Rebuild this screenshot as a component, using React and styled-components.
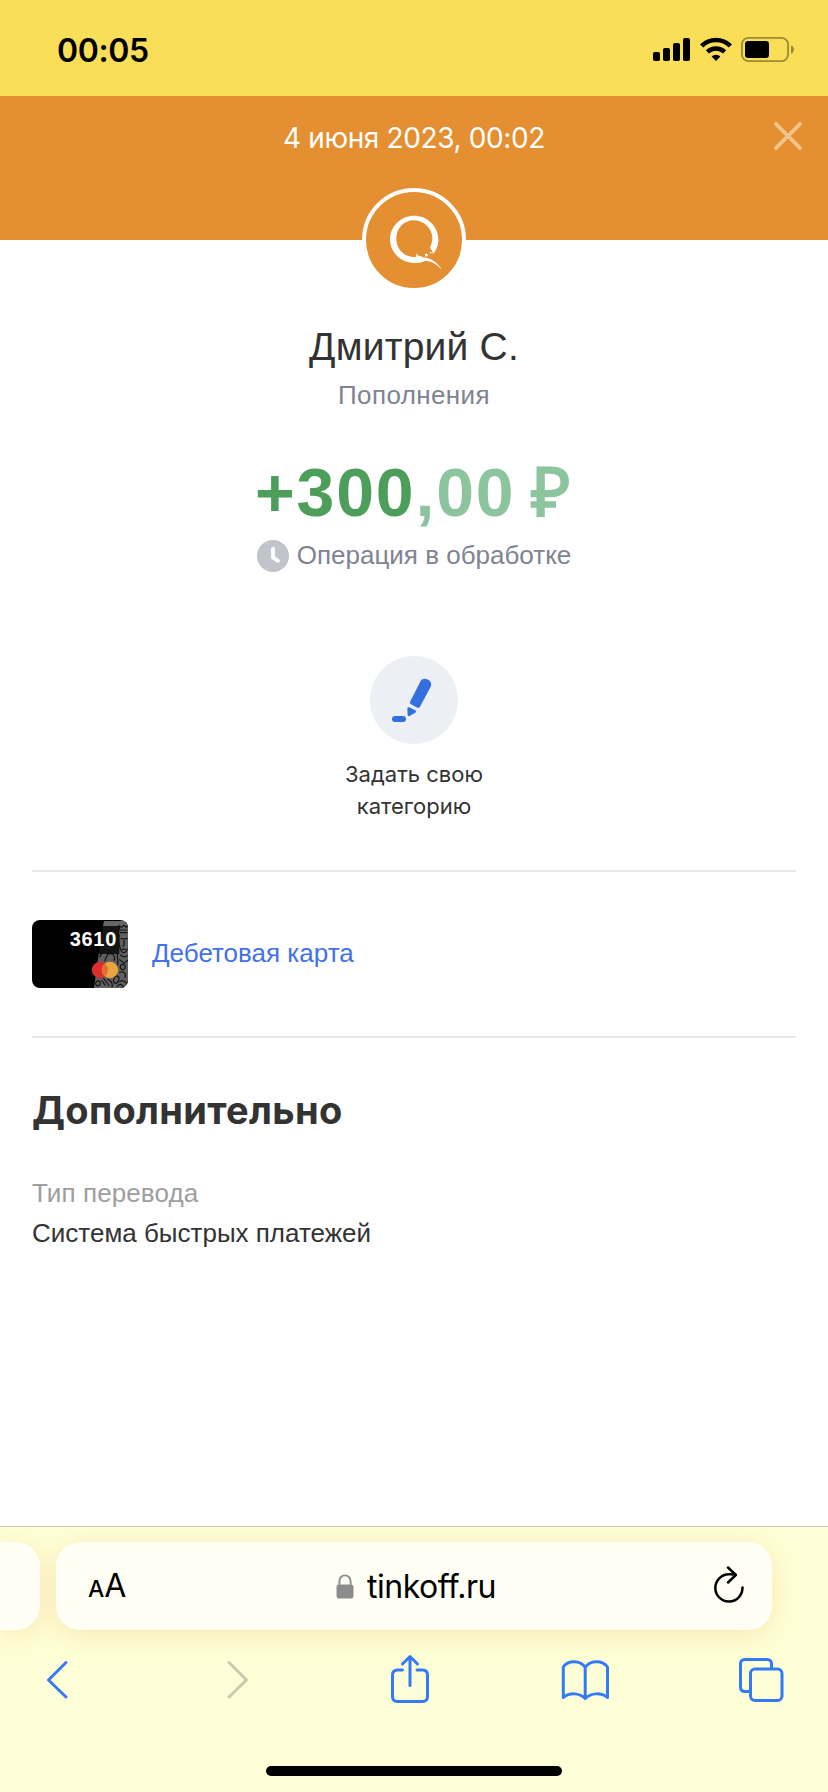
import styled, { createGlobalStyle } from "styled-components";

const FONTS = {
  body: `"Liberation Sans", Arial, sans-serif`,
  system: `Inter, "Liberation Sans", sans-serif`,
};

const COLORS = {
  orange: "#e48f31",
  text: "#333333",
  muted: "#7e8491",
  gray: "#9e9e9e",
  link: "#4272e8",
  income: "#4d9e5b",
  incomeLight: "#8cc59d",
  divider: "#e7e8ea",
  ios: "#347af6",
};

const App = () => {
  return (
    <Screen>
      <GlobalStyles />
      <StatusBar>
        <Time>00:05</Time>
        <Indicators>
          <SignalIcon />
          <WifiIcon />
          <BatteryIcon />
        </Indicators>
      </StatusBar>
      <Header>
        <HeaderDate>4 июня 2023, 00:02</HeaderDate>
        <CloseButton aria-label="Закрыть">
          <svg width="28" height="28" viewBox="0 0 28 28">
            <path
              d="M2 2L26 26M26 2L2 26"
              stroke="#f2c68a"
              strokeWidth="3.8"
              strokeLinecap="round"
            />
          </svg>
        </CloseButton>
      </Header>
      <Content>
        <Operation>
          <Logo>
            <QiwiLogo />
          </Logo>
          <Name>Дмитрий С.</Name>
          <Category>Пополнения</Category>
          <Amount>
            +300<Kopecks>,00 ₽</Kopecks>
          </Amount>
          <Status>
            <ClockIcon />
            <StatusText>Операция в обработке</StatusText>
          </Status>
          <Action>
            <ActionIcon>
              <MarkerIcon />
            </ActionIcon>
            <ActionLabel>
              Задать свою
              <br />
              категорию
            </ActionLabel>
          </Action>
        </Operation>
        <Account>
          <BankCard />
          <AccountLink href="#">Дебетовая карта</AccountLink>
        </Account>
        <Title>Дополнительно</Title>
        <Details>
          <Term>Тип перевода</Term>
          <Value>Система быстрых платежей</Value>
        </Details>
      </Content>
      <Browser>
        <Tabs>
          <PreviousTab />
          <AddressBar>
            <TextSize>
              <small>A</small>A
            </TextSize>
            <Domain>
              <LockIcon />
              tinkoff.ru
            </Domain>
            <ReloadIcon />
          </AddressBar>
        </Tabs>
        <Toolbar>
          <ToolIcon>
            <path d="M36 14.500L18.500 32L36 49" />
          </ToolIcon>
          <ToolIcon color="#cdc8ae">
            <path d="M23 14.500L40.500 32L23 49" />
          </ToolIcon>
          <ToolIcon>
            <path d="M20.500 22H15.500Q10.500 22 10.500 27V48.500Q10.500 53.500 15.500 53.500H40.500Q45.500 53.500 45.500 48.500V27Q45.500 22 40.500 22H35" />
            <path d="M28 37.500V10M20.500 16L28 8.500L35.500 16" />
          </ToolIcon>
          <ToolIcon>
            <path d="M27.200 50.500V19.500C22.500 12 10 12 5.300 19V49.500C11.500 44.500 21.500 44.500 27.200 50.500C33 44.500 43 44.500 49.500 49.500V19C44.500 12 32 12 27.200 19.500" />
          </ToolIcon>
          <ToolIcon>
            <rect x="16.500" y="21" width="31.500" height="31.500" rx="4.500" />
            <path d="M16.500 43.500H11Q6.500 43.500 6.500 39V16Q6.500 11.500 11 11.500H33Q37.500 11.500 37.500 16V20.500" />
          </ToolIcon>
        </Toolbar>
        <HomeIndicator />
      </Browser>
    </Screen>
  );
};

const SignalIcon = () => (
  <svg width="37" height="24" viewBox="0 0 37 24">
    <rect x="0" y="15" width="7" height="9" rx="1.800" />
    <rect x="10" y="11" width="7" height="13" rx="1.800" />
    <rect x="20" y="6" width="7" height="18" rx="1.800" />
    <rect x="30" y="1" width="7" height="23" rx="1.800" />
  </svg>
);

const WifiIcon = () => (
  <svg width="32" height="24" viewBox="0 0 32 24">
    <g fill="none" stroke="#000" strokeWidth="4.500">
      <path d="M1.600 8.900A20.600 20.600 0 0 1 30.400 8.900" />
      <path d="M7.400 14.900A12.400 12.400 0 0 1 24.600 14.900" />
    </g>
    <path d="M16 24L11.600 19.500A6.300 6.300 0 0 1 20.400 19.500Z" />
  </svg>
);

const BatteryIcon = () => (
  <svg width="53" height="25" viewBox="0 0 53 25">
    <rect
      x="0.900"
      y="0.900"
      width="46.200"
      height="23.200"
      rx="6.500"
      fill="none"
      stroke="#9b8a36"
      strokeWidth="1.800"
    />
    <rect x="4" y="4" width="24" height="17" rx="3.200" />
    <path d="M50 8.500C54 9.500 54 15.500 50 16.500Z" fill="#9b8a36" />
  </svg>
);

const QiwiLogo = () => (
  <svg width="96" height="96" viewBox="48 36 288 288">
    <path
      fill="#fff"
      fillRule="evenodd"
      d="M192.500 107C232 107 265 139 265 178C265 217 232 249 192.500 249C153 249 120 217 120 178C120 139 153 107 192.500 107ZM191 121C162 121 139 145 139 176C139 207 163 231 193 231C224 231 247 206 247 175C247 145 221 121 191 121Z"
    />
    <path
      fill={COLORS.orange}
      d="M229 197Q237 196 243 208Q249 213 248 221L262 222L262 250L224 244L212 225L222 212Z"
    />
    <path
      fill="#fff"
      d="M199 219Q203 229 216 231C244 235 262 246 276 270C258 250 242 243 226 243Q212 249 196 249L188 231L199 231ZM246 190L265 180C264 198 258 212 249 221Q250 212 243 208Z"
    />
    <circle cx="229" cy="225" r="4.500" fill="#fff" />
    <circle cx="242" cy="218" r="2.500" fill="#fff" />
  </svg>
);

const ClockIcon = () => (
  <svg width="32" height="32" viewBox="0 0 32 32">
    <circle cx="16" cy="16" r="16" fill="#c1c5cb" />
    <path
      d="M16 9V17.500L21 20.800"
      fill="none"
      stroke="#fff"
      strokeWidth="3.800"
      strokeLinecap="round"
      strokeLinejoin="round"
    />
  </svg>
);

const MarkerIcon = () => (
  <svg width="88" height="88" viewBox="150 48 264 264" fill="#346fe0">
    <path d="M302 123C311 107 341 121 332 140L300 200Q297 205 292 203L272 192Q268 189 271 184Z" />
    <path d="M262 206Q262 200 268 202L286 211Q291 215 286 218L269 228Q264 230 263 225Z" />
    <rect x="216" y="228" width="42" height="18" rx="9" />
  </svg>
);

const BankCard = () => (
  <Card>
    <CardArt width="96" height="68" viewBox="0 0 288 204">
      <path d="M216 3H288V204H186Z" fill="#151515" />
      <path d="M216 3H288V18H213Z" fill="#666" />
      <path d="M262 18H288V204H186L200 102H262Z" fill="#606060" />
      <g fill="none" stroke="#111" strokeWidth="3.500">
        <path d="M263 28L261 17L269 22L276 15L282 22L288 18M262 30H286M264 38H286M262 44C258 60 262 88 272 98Q282 100 286 86M266 56H273M279 56H287M276 54V76L271 80M270 88H281" />
        <path d="M258 46C240 50 244 70 234 76C218 82 210 100 202 112M258 60C248 66 254 84 240 90C226 98 222 112 218 124M226 104C240 96 252 108 246 122M260 96C250 108 262 122 256 136" />
        <path d="M264 104Q276 116 287 106M262 118L276 130L288 120M266 136C274 128 284 138 278 146C270 154 262 144 266 136M262 158C276 150 284 162 278 174M246 176C250 162 264 168 260 180C256 196 240 190 246 176" />
        <path d="M190 190C196 178 206 182 204 192C202 200 192 200 190 190M208 180L220 196M214 174L232 198M226 178Q244 184 240 202M262 186C272 178 284 184 286 196M254 200Q268 184 276 204" />
      </g>
      <circle cx="204" cy="150" r="24.500" fill="#dc2f2b" />
      <circle cx="234" cy="150" r="24.500" fill="#eca43f" />
      <path
        d="M219 131A24.500 24.500 0 0 1 219 169A24.500 24.500 0 0 1 219 131Z"
        fill="#e36d35"
      />
    </CardArt>
    <CardNumber>3610</CardNumber>
  </Card>
);

const LockIcon = () => (
  <svg width="18" height="25" viewBox="0 0 18 25">
    <path
      d="M3.400 11V7A5.600 5.600 0 0 1 14.600 7V11"
      fill="none"
      stroke="#8c8c8c"
      strokeWidth="1.900"
    />
    <rect x="0.500" y="10.500" width="17" height="14" rx="2.800" fill="#8c8c8c" />
  </svg>
);

const ReloadIcon = () => (
  <svg
    width="30"
    height="37"
    viewBox="0 0 30 37"
    fill="none"
    stroke="#000"
    strokeWidth="2.500"
    strokeLinecap="round"
    strokeLinejoin="round"
  >
    <path d="M28.500 21.500A13.600 13.600 0 1 1 15 8.300C17.500 8.100 19.500 8.300 21.500 8.800" />
    <path d="M14 1.500L21.800 9L14 16.500" />
  </svg>
);

const GlobalStyles = createGlobalStyle`
  *, *::before, *::after {
    box-sizing: border-box;
  }

  body {
    margin: 0;
    background: #fff;
  }

  svg {
    display: block;
    flex: none;
  }
`;

const Screen = styled.div`
  display: flex;
  flex-direction: column;
  width: 828px;
  height: 1792px;
  overflow: hidden;
  font-family: ${FONTS.body};
  font-size: 26px;
  color: ${COLORS.text};
`;

const StatusBar = styled.div`
  display: flex;
  justify-content: space-between;
  flex: none;
  height: 96px;
  padding: 37px 34px 0 57px;
  background: #fade57;
`;

const Time = styled.span`
  margin-top: -6px;
  font-family: ${FONTS.system};
  font-size: 32px;
  font-weight: 600;
  line-height: 40px;
  letter-spacing: -0.4px;
  color: #000;
`;

const Indicators = styled.div`
  display: flex;
  align-items: flex-start;
  gap: 9.5px;
`;

const Header = styled.header`
  display: grid;
  grid-template-columns: 1fr auto 1fr;
  align-items: start;
  flex: none;
  height: 144px;
  padding: 26px 26px 0;
  background: ${COLORS.orange};
`;

const HeaderDate = styled.time`
  grid-column: 2;
  font-family: ${FONTS.system};
  font-size: 28px;
  line-height: 32px;
  letter-spacing: -0.37px;
  color: #fff;
`;

const CloseButton = styled.button`
  justify-self: end;
  padding: 0;
  border: none;
  background: none;
`;

const Content = styled.main`
  flex: 1;
  padding: 0 32px;
`;

const Operation = styled.section`
  display: flex;
  flex-direction: column;
  align-items: center;
  padding-bottom: 48px;
`;

const Logo = styled.div`
  width: 104px;
  height: 104px;
  margin-top: -52px;
  border: 4px solid #fff;
  border-radius: 50%;
  background: ${COLORS.orange};
`;

const Name = styled.h1`
  margin: 31px 0 0;
  font-size: 39px;
  font-weight: 400;
  line-height: 48px;
  letter-spacing: 0.2px;
`;

const Category = styled.p`
  margin: 8px 0 0;
  line-height: 32px;
  letter-spacing: 0.4px;
  color: ${COLORS.muted};
`;

const Amount = styled.p`
  margin: 45px 0 0;
  font-size: 68px;
  font-weight: 700;
  line-height: 72px;
  letter-spacing: 1.8px;
  white-space: nowrap;
  color: ${COLORS.income};
`;

const Kopecks = styled.span`
  word-spacing: -5px;
  color: ${COLORS.incomeLight};
`;

const Status = styled.div`
  display: flex;
  gap: 8px;
  margin-top: 12px;
`;

const StatusText = styled.span`
  line-height: 30px;
  color: ${COLORS.muted};
`;

const Action = styled.div`
  display: flex;
  flex-direction: column;
  align-items: center;
  margin-top: 84px;
`;

const ActionIcon = styled.div`
  width: 88px;
  height: 88px;
  border-radius: 50%;
  background: #ecf0f5;
`;

const ActionLabel = styled.span`
  margin-top: 14px;
  font-family: ${FONTS.system};
  font-size: 22px;
  line-height: 32px;
  text-align: center;
`;

const Account = styled.section`
  display: flex;
  align-items: center;
  gap: 24px;
  height: 168px;
  border-top: 2px solid ${COLORS.divider};
  border-bottom: 2px solid ${COLORS.divider};
`;

const Card = styled.div`
  position: relative;
  width: 96px;
  height: 68px;
  border-radius: 8px;
  overflow: hidden;
  background: #000;
`;

const CardArt = styled.svg`
  position: absolute;
  inset: 0;
`;

const CardNumber = styled.span`
  position: absolute;
  top: 8px;
  right: 11px;
  font-size: 20px;
  font-weight: 700;
  line-height: 22px;
  letter-spacing: 0.7px;
  color: #fff;
`;

const AccountLink = styled.a`
  padding-bottom: 2px;
  line-height: 32px;
  text-decoration: none;
  color: ${COLORS.link};
`;

const Title = styled.h2`
  margin: 48px 0 0;
  font-family: ${FONTS.system};
  font-size: 38px;
  font-weight: 700;
  line-height: 48px;
  letter-spacing: 0.3px;
`;

const Details = styled.dl`
  margin: 39px 0 0;
  line-height: 40px;
`;

const Term = styled.dt`
  letter-spacing: 0.1px;
  color: ${COLORS.gray};
`;

const Value = styled.dd`
  margin: 0;
`;

const Browser = styled.footer`
  flex: none;
  height: 266px;
  border-top: 1px solid #cdc9ae;
  background: #feffd6;
`;

const Tabs = styled.div`
  display: flex;
  gap: 16px;
  padding-top: 15px;
`;

const PreviousTab = styled.div`
  width: 40px;
  height: 88px;
  border-radius: 0 24px 24px 0;
  background: #fffff6;
  box-shadow: 0 5px 28px rgba(224, 150, 60, 0.22);
`;

const AddressBar = styled.div`
  display: grid;
  grid-template-columns: 1fr auto 1fr;
  align-items: center;
  width: 716px;
  height: 88px;
  padding: 0 28px 0 32px;
  border-radius: 24px;
  background: #fffff6;
  box-shadow: 0 5px 28px rgba(224, 150, 60, 0.22);
  font-family: ${FONTS.system};
  color: #000;

  & > svg {
    justify-self: end;
    margin-bottom: 4px;
  }
`;

const TextSize = styled.span`
  padding-top: 3px;
  font-size: 32px;
  line-height: 40px;

  small {
    font-size: 23px;
    font-weight: 500;
  }
`;

const Domain = styled.span`
  display: flex;
  align-items: center;
  gap: 13px;
  padding-top: 1px;
  font-size: 32px;
  line-height: 40px;
  letter-spacing: -0.5px;
`;

const Toolbar = styled.nav`
  display: flex;
  justify-content: space-between;
  padding: 18px 38px 0 30px;
`;

const ToolIcon = styled.svg.attrs({ viewBox: "0 0 56 60" })`
  width: 56px;
  height: 60px;
  fill: none;
  stroke: ${(props) => props.color || COLORS.ios};
  stroke-width: 3;
  stroke-linecap: round;
  stroke-linejoin: round;
`;

const HomeIndicator = styled.div`
  width: 296px;
  height: 10px;
  margin: 58px auto 0;
  border-radius: 5px;
  background: #000;
`;

export default App;
